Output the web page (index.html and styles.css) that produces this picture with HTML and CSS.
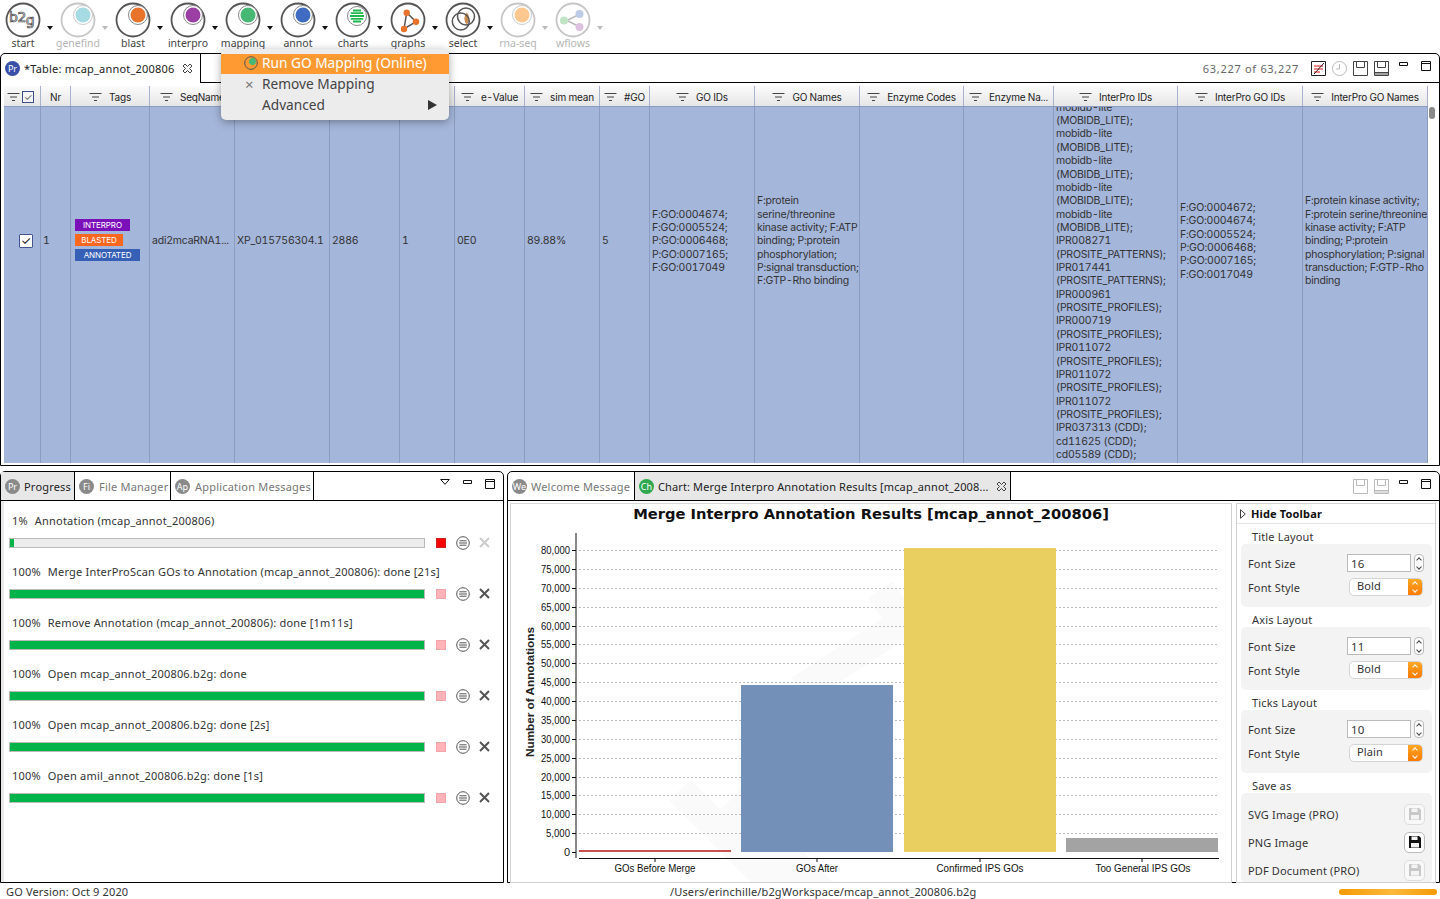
FILE: index.html
```html
<!DOCTYPE html>
<html lang="en">
<head>
<meta charset="utf-8">
<title>Blast2GO</title>
<link rel="stylesheet" href="styles.css">
</head>
<body>
<svg class="defs" width="0" height="0" aria-hidden="true">
  <defs>
    <symbol id="filter" viewBox="0 0 12 8"><path d="M0 .5h12M2.5 4h7M4.5 7.5h3" fill="none" stroke="#444" stroke-width="1"/></symbol>
    <symbol id="close" viewBox="0 0 11 11"><path d="M1 3l2-2 2.500 2.500L8 1l2 2-2.500 2.500L10 8l-2 2-2.500-2.500L3 10 1 8l2.500-2.500z" fill="none" stroke="#444" stroke-width="1"/></symbol>
    <symbol id="floppy" viewBox="0 0 15 15"><path d="M.5.500h14v14H.5zM3.500.5v6h8v-6" fill="none" stroke="currentColor" stroke-width="1"/></symbol>
    <symbol id="floppy2" viewBox="0 0 15 15"><path d="M.5.500h14v14H.5zM3.500.5v6h8v-6M.5 11.500h14" fill="none" stroke="currentColor" stroke-width="1"/><path d="M1 12h13v2H1z" fill="currentColor" opacity=".5"/></symbol>
    <symbol id="savebtn" viewBox="0 0 14 14"><path d="M1 1h10l2 2v10H1z" fill="currentColor"/><path d="M3.500 1.500h6v3.500h-6z" fill="#f4f4f4"/><path d="M3 8h8v4.500H3z" fill="#f4f4f4"/></symbol>
    <symbol id="minimize" viewBox="0 0 9 5"><path d="M.5.500h8v3h-8z" fill="none" stroke="#111" stroke-width="1"/></symbol>
    <symbol id="maximize" viewBox="0 0 10 10"><path d="M.5.500h9v9h-9zM.5 2.500h9" fill="none" stroke="#111" stroke-width="1"/></symbol>
    <symbol id="lines" viewBox="0 0 14 14"><circle cx="7" cy="7" r="6.300" fill="none" stroke="#555" stroke-width="1"/><path d="M3.500 4.800h7M3 7h8M3.500 9.200h7" stroke="#555" stroke-width="1"/></symbol>
    <symbol id="cross" viewBox="0 0 11 11"><path d="M1 1l9 9M10 1l-9 9" stroke="currentColor" stroke-width="2"/></symbol>
  </defs>
</svg>

<header class="toolbar">
  <div class="tool">
    <div class="tool-main">
      <svg class="tool-icon" viewBox="0 0 36 36"><circle cx="18" cy="18" r="16.500" class="ring"/><text x="4" y="20" class="b2g">b<tspan dx="-.5" dy="0">2</tspan><tspan dx="-.5" dy="3">g</tspan></text></svg>
      <span class="tool-label">start</span>
    </div>
    <span class="caret"></span>
  </div>
  <div class="tool off">
    <div class="tool-main">
      <svg class="tool-icon" viewBox="0 0 36 36"><circle cx="18" cy="18" r="16.500" class="ring"/><circle cx="23" cy="13" r="9.500" class="halo"/><circle cx="23" cy="13" r="7.500" fill="#a6dbe4"/></svg>
      <span class="tool-label">genefind</span>
    </div>
    <span class="caret"></span>
  </div>
  <div class="tool">
    <div class="tool-main">
      <svg class="tool-icon" viewBox="0 0 36 36"><circle cx="18" cy="18" r="16.500" class="ring"/><circle cx="23" cy="13" r="9.500" class="halo"/><circle cx="23" cy="13" r="7.500" fill="#e9732a"/></svg>
      <span class="tool-label">blast</span>
    </div>
    <span class="caret"></span>
  </div>
  <div class="tool">
    <div class="tool-main">
      <svg class="tool-icon" viewBox="0 0 36 36"><circle cx="18" cy="18" r="16.500" class="ring"/><circle cx="23" cy="13" r="9.500" class="halo"/><circle cx="23" cy="13" r="7.500" fill="#9b3fa5"/></svg>
      <span class="tool-label">interpro</span>
    </div>
    <span class="caret"></span>
  </div>
  <div class="tool">
    <div class="tool-main">
      <svg class="tool-icon" viewBox="0 0 36 36"><circle cx="18" cy="18" r="16.500" class="ring"/><circle cx="23" cy="13" r="9.500" class="halo"/><circle cx="23" cy="13" r="7.500" fill="#46b873"/></svg>
      <span class="tool-label">mapping</span>
    </div>
    <span class="caret"></span>
  </div>
  <div class="tool">
    <div class="tool-main">
      <svg class="tool-icon" viewBox="0 0 36 36"><circle cx="18" cy="18" r="16.500" class="ring"/><circle cx="23" cy="13" r="9.500" class="halo"/><circle cx="23" cy="13" r="7.500" fill="#3f6cc2"/></svg>
      <span class="tool-label">annot</span>
    </div>
    <span class="caret"></span>
  </div>
  <div class="tool">
    <div class="tool-main">
      <svg class="tool-icon" viewBox="0 0 36 36"><circle cx="18" cy="18" r="16.500" class="ring"/><circle cx="22" cy="14" r="9.500" class="halo"/><circle cx="22" cy="14" r="7.500" fill="#fff"/><path d="M18 8.500h8M15.800 11.200h12.400M15 14h14M15.800 16.800h12.400M18 19.500h8" stroke="#1fb84f" stroke-width="1.800"/></svg>
      <span class="tool-label">charts</span>
    </div>
    <span class="caret"></span>
  </div>
  <div class="tool">
    <div class="tool-main">
      <svg class="tool-icon" viewBox="0 0 36 36"><circle cx="18" cy="18" r="16.500" class="ring"/><path d="M16.700 10.700L26 19.700 14 27z" fill="none" stroke="#555" stroke-width="1.500"/><circle cx="16.700" cy="10.700" r="3.200" fill="#e9732a"/><circle cx="26" cy="19.700" r="3.200" fill="#e9732a"/><circle cx="14" cy="27" r="3.200" fill="#e9732a"/></svg>
      <span class="tool-label">graphs</span>
    </div>
    <span class="caret"></span>
  </div>
  <div class="tool">
    <div class="tool-main">
      <svg class="tool-icon" viewBox="0 0 36 36"><circle cx="18" cy="18" r="16.500" class="ring"/><path d="M21.800 10.500a8.500 8.500 0 0 1 0 12 8.500 8.500 0 0 1 0-12z" fill="#c98a4f"/><circle cx="15.800" cy="19.500" r="8.500" fill="none" stroke="#555" stroke-width="1.500"/><circle cx="21" cy="14.500" r="8.500" fill="none" stroke="#555" stroke-width="1.500"/></svg>
      <span class="tool-label">select</span>
    </div>
    <span class="caret"></span>
  </div>
  <div class="tool off">
    <div class="tool-main">
      <svg class="tool-icon" viewBox="0 0 36 36"><circle cx="18" cy="18" r="16.500" class="ring"/><circle cx="22" cy="13" r="9.500" class="halo"/><circle cx="22" cy="13" r="7.500" fill="#fcc88f"/></svg>
      <span class="tool-label">rna-seq</span>
    </div>
    <span class="caret"></span>
  </div>
  <div class="tool off">
    <div class="tool-main">
      <svg class="tool-icon" viewBox="0 0 36 36"><circle cx="18" cy="18" r="16.500" class="ring"/><path d="M13 18l10-5M13 19l10 5" stroke="#bbb" stroke-width="1.500"/><circle cx="9" cy="18.500" r="4" fill="#bfe3c4"/><circle cx="24.500" cy="12" r="4" fill="#bccbe6"/><circle cx="24.500" cy="25" r="4" fill="#dcc2df"/></svg>
      <span class="tool-label">wflows</span>
    </div>
    <span class="caret"></span>
  </div>
</header>

<section class="panel table-panel">
  <div class="tabbar">
    <div class="tab tab-table">
      <span class="badge badge-blue">Pr</span>
      <span class="tab-text dark">*Table: mcap_annot_200806</span>
      <svg class="close-icon"><use href="#close"/></svg>
    </div>
    <div class="tab-fill">
      <span class="count">63,227 of 63,227</span>
      <svg class="sq-btn" viewBox="0 0 15 15"><path d="M.5.500h14v14H.5z" fill="#fff" stroke="#222"/><path d="M3 5h9M3 8h9M3 11h6" stroke="#e11" stroke-width="1"/><path d="M3 13L13 2" stroke="#222" stroke-width="1"/></svg>
      <svg class="sq-btn" viewBox="0 0 15 15"><circle cx="7.500" cy="7.500" r="7" fill="none" stroke="#bbb"/><path d="M7.500 3v5H4" fill="none" stroke="#bbb"/></svg>
      <svg class="sq-btn faint-dark"><use href="#floppy"/></svg>
      <svg class="sq-btn faint-dark"><use href="#floppy2"/></svg>
      <svg class="win-min"><use href="#minimize"/></svg>
      <svg class="win-max"><use href="#maximize"/></svg>
    </div>
  </div>
  <div class="table">
    <div class="thead grid-cols">
      <div class="th th-check"><svg class="filter"><use href="#filter"/></svg><span class="mini-check">✓</span></div>
      <div class="th">Nr</div>
      <div class="th"><svg class="filter"><use href="#filter"/></svg>Tags</div>
      <div class="th th-clip"><svg class="filter"><use href="#filter"/></svg><span class="th-seq">SeqName</span></div>
      <div class="th"></div>
      <div class="th"></div>
      <div class="th"></div>
      <div class="th"><svg class="filter"><use href="#filter"/></svg>e-Value</div>
      <div class="th"><svg class="filter"><use href="#filter"/></svg>sim mean</div>
      <div class="th"><svg class="filter"><use href="#filter"/></svg>#GO</div>
      <div class="th"><svg class="filter"><use href="#filter"/></svg>GO IDs</div>
      <div class="th"><svg class="filter"><use href="#filter"/></svg>GO Names</div>
      <div class="th"><svg class="filter"><use href="#filter"/></svg>Enzyme Codes</div>
      <div class="th"><svg class="filter"><use href="#filter"/></svg>Enzyme Na...</div>
      <div class="th"><svg class="filter"><use href="#filter"/></svg>InterPro IDs</div>
      <div class="th"><svg class="filter"><use href="#filter"/></svg>InterPro GO IDs</div>
      <div class="th"><svg class="filter"><use href="#filter"/></svg>InterPro GO Names</div>
    </div>
    <div class="tbody">
      <div class="row grid-cols">
        <div class="td td-check"><span class="check">✓</span></div>
        <div class="td">1</div>
        <div class="td td-tags"><span class="tag tag-ip">INTERPRO</span><span class="tag tag-bl">BLASTED</span><span class="tag tag-an">ANNOTATED</span></div>
        <div class="td">adi2mcaRNA1...</div>
        <div class="td">XP_015756304.1</div>
        <div class="td">2886</div>
        <div class="td">1</div>
        <div class="td">0E0</div>
        <div class="td">89.88%</div>
        <div class="td">5</div>
        <div class="td"><p>F:GO:0004674;<br>F:GO:0005524;<br>P:GO:0006468;<br>P:GO:0007165;<br>F:GO:0017049</p></div>
        <div class="td"><p>F:protein<br>serine/threonine<br>kinase activity; F:ATP<br>binding; P:protein<br>phosphorylation;<br>P:signal transduction;<br>F:GTP-Rho binding</p></div>
        <div class="td"></div>
        <div class="td"></div>
        <div class="td"><p>mobidb-lite<br>(MOBIDB_LITE);<br>mobidb-lite<br>(MOBIDB_LITE);<br>mobidb-lite<br>(MOBIDB_LITE);<br>mobidb-lite<br>(MOBIDB_LITE);<br>mobidb-lite<br>(MOBIDB_LITE);<br>mobidb-lite<br>(MOBIDB_LITE);<br>mobidb-lite<br>(MOBIDB_LITE);<br>mobidb-lite<br>(MOBIDB_LITE);<br>IPR008271<br>(PROSITE_PATTERNS);<br>IPR017441<br>(PROSITE_PATTERNS);<br>IPR000961<br>(PROSITE_PROFILES);<br>IPR000719<br>(PROSITE_PROFILES);<br>IPR011072<br>(PROSITE_PROFILES);<br>IPR011072<br>(PROSITE_PROFILES);<br>IPR011072<br>(PROSITE_PROFILES);<br>IPR037313 (CDD);<br>cd11625 (CDD);<br>cd05589 (CDD);</p></div>
        <div class="td"><p>F:GO:0004672;<br>F:GO:0004674;<br>F:GO:0005524;<br>P:GO:0006468;<br>P:GO:0007165;<br>F:GO:0017049</p></div>
        <div class="td"><p>F:protein kinase activity;<br>F:protein serine/threonine<br>kinase activity; F:ATP<br>binding; P:protein<br>phosphorylation; P:signal<br>transduction; F:GTP-Rho<br>binding</p></div>
      </div>
    </div>
    <div class="scroll-thumb"></div>
  </div>
</section>

<div class="bottom">
  <section class="panel progress-panel">
    <div class="tabbar">
      <div class="tab tab-active tab-progress"><span class="badge badge-gray">Pr</span><span class="tab-text dark">Progress</span></div>
      <div class="tab tab-files"><span class="badge badge-gray">Fi</span><span class="tab-text">File Manager</span></div>
      <div class="tab tab-msgs"><span class="badge badge-gray">Ap</span><span class="tab-text">Application Messages</span></div>
      <div class="tab-fill">
        <svg class="view-menu" viewBox="0 0 10 6"><path d="M.7.500h8.600L5 5.300z" fill="none" stroke="#111"/></svg>
        <svg class="win-min"><use href="#minimize"/></svg>
        <svg class="win-max"><use href="#maximize"/></svg>
      </div>
    </div>
    <div class="progress-body">
      <div class="job">
        <div class="job-title"><b>1%</b>Annotation (mcap_annot_200806)</div>
        <div class="job-line">
          <div class="bar"><div class="bar-fill" style="width:1%"></div></div>
          <span class="stop"></span><svg class="job-btn"><use href="#lines"/></svg><svg class="job-x job-x-off"><use href="#cross"/></svg>
        </div>
      </div>
      <div class="job">
        <div class="job-title"><b>100%</b>Merge InterProScan GOs to Annotation (mcap_annot_200806): done [21s]</div>
        <div class="job-line">
          <div class="bar"><div class="bar-fill" style="width:100%"></div></div>
          <span class="stop stop-off"></span><svg class="job-btn"><use href="#lines"/></svg><svg class="job-x"><use href="#cross"/></svg>
        </div>
      </div>
      <div class="job">
        <div class="job-title"><b>100%</b>Remove Annotation (mcap_annot_200806): done [1m11s]</div>
        <div class="job-line">
          <div class="bar"><div class="bar-fill" style="width:100%"></div></div>
          <span class="stop stop-off"></span><svg class="job-btn"><use href="#lines"/></svg><svg class="job-x"><use href="#cross"/></svg>
        </div>
      </div>
      <div class="job">
        <div class="job-title"><b>100%</b>Open mcap_annot_200806.b2g: done</div>
        <div class="job-line">
          <div class="bar"><div class="bar-fill" style="width:100%"></div></div>
          <span class="stop stop-off"></span><svg class="job-btn"><use href="#lines"/></svg><svg class="job-x"><use href="#cross"/></svg>
        </div>
      </div>
      <div class="job">
        <div class="job-title"><b>100%</b>Open mcap_annot_200806.b2g: done [2s]</div>
        <div class="job-line">
          <div class="bar"><div class="bar-fill" style="width:100%"></div></div>
          <span class="stop stop-off"></span><svg class="job-btn"><use href="#lines"/></svg><svg class="job-x"><use href="#cross"/></svg>
        </div>
      </div>
      <div class="job">
        <div class="job-title"><b>100%</b>Open amil_annot_200806.b2g: done [1s]</div>
        <div class="job-line">
          <div class="bar"><div class="bar-fill" style="width:100%"></div></div>
          <span class="stop stop-off"></span><svg class="job-btn"><use href="#lines"/></svg><svg class="job-x"><use href="#cross"/></svg>
        </div>
      </div>
    </div>
  </section>

  <section class="panel chart-panel">
    <div class="tabbar">
      <div class="tab tab-welcome"><span class="badge badge-gray">We</span><span class="tab-text">Welcome Message</span></div>
      <div class="tab tab-active tab-chart"><span class="badge badge-green">Ch</span><span class="tab-text dark">Chart: Merge Interpro Annotation Results [mcap_annot_2008...</span><svg class="close-icon"><use href="#close"/></svg></div>
      <div class="tab-fill">
        <svg class="sq-btn faint"><use href="#floppy"/></svg>
        <svg class="sq-btn faint"><use href="#floppy2"/></svg>
        <svg class="win-min"><use href="#minimize"/></svg>
        <svg class="win-max"><use href="#maximize"/></svg>
      </div>
    </div>
    <div class="chart-body">
      <div class="chart-box">
        <svg class="chart" viewBox="511 504 720 378">
          <path d="M680 790L790 900M730 800L830 900M800 690L1000 560M880 590L960 700" stroke="#fafafa" stroke-width="30" fill="none"/>
          <text x="871" y="519" class="chart-title">Merge Interpro Annotation Results [mcap_annot_200806]</text>
          <text transform="translate(534 692) rotate(-90)" class="y-title" textLength="130" lengthAdjust="spacingAndGlyphs">Number of Annotations</text>
          <g class="grid">
            <path d="M579 550.500h640M579 569.500h640M579 588.500h640M579 607.500h640M579 626.500h640M579 644.500h640M579 663.500h640M579 682.500h640M579 701.500h640M579 720.500h640M579 739.500h640M579 758.500h640M579 777.500h640M579 795.500h640M579 814.500h640M579 833.500h640"/>
          </g>
          <path d="M576 533V858M572 550.500h4M572 569.500h4M572 588.500h4M572 607.500h4M572 626.500h4M572 644.500h4M572 663.500h4M572 682.500h4M572 701.500h4M572 720.500h4M572 739.500h4M572 758.500h4M572 777.500h4M572 795.500h4M572 814.500h4M572 833.500h4M572 852.500h4M579 858.500H1219M655 858v4M817 858v4M980 858v4M1142 858v4" stroke="#111" fill="none"/>
          <g class="yt">
            <text x="570" y="554" textLength="29" lengthAdjust="spacingAndGlyphs">80,000</text>
            <text x="570" y="573" textLength="29" lengthAdjust="spacingAndGlyphs">75,000</text>
            <text x="570" y="592" textLength="29" lengthAdjust="spacingAndGlyphs">70,000</text>
            <text x="570" y="611" textLength="29" lengthAdjust="spacingAndGlyphs">65,000</text>
            <text x="570" y="630" textLength="29" lengthAdjust="spacingAndGlyphs">60,000</text>
            <text x="570" y="648" textLength="29" lengthAdjust="spacingAndGlyphs">55,000</text>
            <text x="570" y="667" textLength="29" lengthAdjust="spacingAndGlyphs">50,000</text>
            <text x="570" y="686" textLength="29" lengthAdjust="spacingAndGlyphs">45,000</text>
            <text x="570" y="705" textLength="29" lengthAdjust="spacingAndGlyphs">40,000</text>
            <text x="570" y="724" textLength="29" lengthAdjust="spacingAndGlyphs">35,000</text>
            <text x="570" y="743" textLength="29" lengthAdjust="spacingAndGlyphs">30,000</text>
            <text x="570" y="762" textLength="29" lengthAdjust="spacingAndGlyphs">25,000</text>
            <text x="570" y="781" textLength="29" lengthAdjust="spacingAndGlyphs">20,000</text>
            <text x="570" y="799" textLength="29" lengthAdjust="spacingAndGlyphs">15,000</text>
            <text x="570" y="818" textLength="29" lengthAdjust="spacingAndGlyphs">10,000</text>
            <text x="570" y="837" textLength="24" lengthAdjust="spacingAndGlyphs">5,000</text>
            <text x="570" y="856">0</text>
          </g>
          <rect x="579" y="850" width="152" height="2" fill="#c8504f"/>
          <rect x="741" y="685" width="152" height="167" fill="#7390b8"/>
          <rect x="904" y="548" width="152" height="304" fill="#e9cf60"/>
          <rect x="1066" y="838" width="152" height="14" fill="#a3a3a3"/>
          <g class="xt">
            <text x="655" y="872" textLength="81" lengthAdjust="spacingAndGlyphs">GOs Before Merge</text>
            <text x="817" y="872" textLength="42" lengthAdjust="spacingAndGlyphs">GOs After</text>
            <text x="980" y="872" textLength="87" lengthAdjust="spacingAndGlyphs">Confirmed IPS GOs</text>
            <text x="1143" y="872" textLength="95" lengthAdjust="spacingAndGlyphs">Too General IPS GOs</text>
          </g>
        </svg>
      </div>
      <aside class="side">
        <div class="hide-row"><svg class="tri" viewBox="0 0 6 10"><path d="M.5.700L5.300 5 .5 9.300z" fill="none" stroke="#444"/></svg><b>Hide Toolbar</b></div>
        <div class="group-label">Title Layout</div>
        <div class="group">
          <div class="field"><span>Font Size</span><span class="input">16</span><span class="stepper"><i></i><i></i></span></div>
          <div class="field"><span>Font Style</span><span class="select">Bold<span class="sel-arrow"><i></i><i></i></span></span></div>
        </div>
        <div class="group-label">Axis Layout</div>
        <div class="group">
          <div class="field"><span>Font Size</span><span class="input">11</span><span class="stepper"><i></i><i></i></span></div>
          <div class="field"><span>Font Style</span><span class="select">Bold<span class="sel-arrow"><i></i><i></i></span></span></div>
        </div>
        <div class="group-label">Ticks Layout</div>
        <div class="group">
          <div class="field"><span>Font Size</span><span class="input">10</span><span class="stepper"><i></i><i></i></span></div>
          <div class="field"><span>Font Style</span><span class="select">Plain<span class="sel-arrow"><i></i><i></i></span></span></div>
        </div>
        <div class="group-label">Save as</div>
        <div class="group group-save">
          <div class="save-row"><span>SVG Image (PRO)</span><span class="save-btn off"><svg><use href="#savebtn"/></svg></span></div>
          <div class="save-row"><span>PNG Image</span><span class="save-btn"><svg><use href="#savebtn"/></svg></span></div>
          <div class="save-row"><span>PDF Document (PRO)</span><span class="save-btn off"><svg><use href="#savebtn"/></svg></span></div>
        </div>
      </aside>
    </div>
  </section>
</div>

<footer class="status">
  <span class="status-left">GO Version: Oct 9 2020</span>
  <span class="status-mid">/Users/erinchille/b2gWorkspace/mcap_annot_200806.b2g</span>
  <span class="status-bar"></span>
</footer>

<div class="menu">
  <div class="menu-item menu-hot"><svg class="menu-ico" viewBox="0 0 14 14"><circle cx="7" cy="7" r="6.300" fill="none" stroke="#555" stroke-width="1"/><circle cx="8.500" cy="5.500" r="3.500" fill="#46b873"/></svg><span class="menu-text">Run GO Mapping (Online)</span></div>
  <div class="menu-item"><span class="menu-x">×</span><span class="menu-text">Remove Mapping</span></div>
  <div class="menu-item"><span class="menu-text">Advanced</span><span class="menu-arrow"></span></div>
</div>
</body>
</html>
```

FILE: styles.css
```css
* { box-sizing: border-box; }
html, body { margin: 0; padding: 0; }
body {
  width: 1440px;
  height: 899px;
  overflow: hidden;
  background: #fff;
  color: #333;
  font-family: "Noto Sans", "DejaVu Sans", sans-serif;
  font-size: 11px;
  display: flex;
  flex-direction: column;
  position: relative;
}
.defs { position: absolute; }

/* toolbar */
.toolbar { height: 53px; display: flex; padding: 2px 0 0 5px; flex: none; }
.tool { width: 55px; display: flex; }
.tool-main { width: 36px; display: flex; flex-direction: column; align-items: center; }
.tool-icon { width: 36px; height: 36px; flex: none; }
.ring { fill: none; stroke: #555; stroke-width: 1.800; }
.halo { fill: #fff; stroke: #888; stroke-width: 1; }
.b2g { font-family: "DejaVu Sans", sans-serif; font-size: 14px; fill: #fff; stroke: #444; stroke-width: .7; }
.tool-label { font-size: 10.500px; line-height: 12px; margin-top: -1.500px; white-space: nowrap; color: #444; }
.caret { width: 0; height: 0; margin: 24px 0 0 6px; border: 3px solid transparent; border-top: 4px solid #111; border-bottom: 0; }
.off .ring { stroke: #c6c6c6; }
.off .halo { stroke: #ccc; }
.off .tool-label { color: #b5b5b5; }
.off .caret { border-top-color: #bbb; }

/* panels */
.panel { border: 1px solid #000; border-radius: 5px 5px 0 0; background: #fff; display: flex; flex-direction: column; }
.tabbar { height: 29px; flex: none; display: flex; align-items: stretch; }
.tab { display: flex; align-items: center; gap: 4px; padding-left: 4px; border-right: 1px solid #000; white-space: nowrap; border-bottom: 1px solid #000; }
.tab-active { background: #e7e7e7; }
.tab-fill { flex: 1; border-bottom: 1px solid #000; display: flex; align-items: center; justify-content: flex-end; }
.tab-text { color: #777; font-size: 11px; letter-spacing: .2px; }
.tab-text.dark { color: #222; }
.badge { width: 15px; height: 15px; border-radius: 50%; color: #fff; font-size: 9px; line-height: 15px; text-align: center; flex: none; }
.badge-blue { background: #3850a8; }
.badge-gray { background: #8a8a8a; }
.badge-green { background: #2fa84f; }
.close-icon { width: 11px; height: 11px; margin-left: 3px; flex: none; }
.count { color: #666; letter-spacing: .7px; margin-right: 12px; }
.sq-btn { width: 15px; height: 15px; margin-right: 6px; flex: none; }
.faint { color: #bbb; }
.faint-dark { color: #444; }
.win-min { width: 9px; height: 5px; margin: 0 13px 8px 4px; flex: none; }
.win-max { width: 10px; height: 10px; margin: 0 5px 5px 0; flex: none; }
.view-menu { width: 10px; height: 6px; margin: 0 9px 8px 0; }

/* table panel */
.table-panel { height: 413px; flex: none; }
.tab-table { width: 200px; padding-left: 4px; border-bottom: 0; }
.table-panel .tab-fill { padding-right: 3px; }
.table { flex: 1; min-height: 0; padding: 3px 0 2px 3px; display: flex; flex-direction: column; position: relative; font-family: Inter, "Liberation Sans", sans-serif; font-variant-numeric: tabular-nums; }
.grid-cols { display: grid; grid-template-columns: 37px 30px 79px 85px 95px 70px 55px 70px 75px 50px 105px 105px 104px 90px 124px 125px 125px; width: 1424px; }
.thead { height: 21px; flex: none; background: linear-gradient(#fbfbfb, #e6e6e6); border-bottom: 1px solid #8c9cc0; }
.th { display: flex; align-items: center; justify-content: center; gap: 7px; padding-top: 1px; border-right: 1px solid #a7b3cc; font-size: 10px; letter-spacing: -.2px; color: #222; white-space: nowrap; overflow: hidden; }
.th-clip { justify-content: flex-start; padding-left: 10px; }
.th-seq { margin-right: -40px; }
.filter { width: 13px; height: 8px; flex: none; }
.th-check { gap: 2px; justify-content: flex-start; padding-left: 3px; }
.mini-check { width: 12px; height: 12px; border: 1px solid #3c4c8c; background: #f6f6f6; color: #666; font-size: 10px; line-height: 10px; text-align: center; }
.tbody { flex: 1; min-height: 0; overflow: hidden; background: #a4b6da; width: 1424px; }
.row { height: 446px; margin-top: -89px; font-size: 10.500px; letter-spacing: -.22px; line-height: 13.360px; color: #333; }
.td { display: flex; align-items: center; padding-left: 2px; border-right: 1px solid #8b9cc0; white-space: nowrap; overflow: hidden; }
.td p { margin: 0; }
.td-check { padding: 0 0 0 15px; }
.check { width: 14px; height: 14px; border: 1px solid #47558f; border-radius: 1px; background: #fff; color: #222; font-size: 12px; line-height: 12px; text-align: center; }
.td-tags { flex-direction: column; align-items: flex-start; justify-content: center; gap: 3px; padding: 0 0 2px 4px; }
.tag { height: 12px; color: #fff; font-size: 8px; line-height: 12px; text-align: center; letter-spacing: -.1px; }
.tag-ip { width: 55px; background: #7b10b8; }
.tag-bl { width: 48px; background: #ff6620; }
.tag-an { width: 65px; background: #3560b5; }
.scroll-thumb { position: absolute; right: 4px; top: 24px; width: 6px; height: 12px; border-radius: 3px; background: #888; }

/* bottom */
.bottom { height: 412px; margin-top: 5px; flex: none; display: flex; gap: 3px; }
.progress-panel { width: 504px; flex: none; border-radius: 5px 5px 0 0; }
.chart-panel { flex: 1; }
.tab-progress { width: 74px; }
.tab-files { width: 96px; gap: 5px; }
.tab-msgs { width: 143px; gap: 5px; }
.tab-welcome { width: 127px; }
.tab-chart { width: 376px; }
.tab-chart .tab-text { letter-spacing: .12px; }
.progress-panel .tab-fill, .chart-panel .tab-fill { padding-right: 3px; }
.progress-body { flex: 1; border-left: 3px solid #eaeaea; padding: 11px 9px 0 5px; }
.job { height: 51px; }
.job-title { height: 17px; padding-left: 3px; line-height: 17px; font-size: 11px; letter-spacing: .2px; color: #333; }
.job-title b { font-weight: 400; margin-right: 7px; }
.job-line { display: flex; align-items: center; height: 17px; margin-top: 5px; }
.bar { width: 416px; height: 10px; background: #ececec; border: 1px solid #bbb; flex: none; }
.bar-fill { height: 100%; background: #00b44a; }
.stop { width: 10px; height: 10px; margin-left: 11px; background: #f00; border: 1px solid #c22; flex: none; }
.stop-off { background: #ffb3b9; border-color: #f2a4a8; }
.job-btn { width: 14px; height: 14px; margin-left: 10px; flex: none; }
.job-x { width: 11px; height: 11px; margin-left: 9px; flex: none; color: #555; }
.job-x-off { color: #ccc; }

/* chart */
.chart-body { flex: 1; min-height: 0; display: flex; padding: 2px 3px 0 2px; gap: 4px; }
.chart-box { width: 722px; flex: none; height: 380px; border: 1px solid #d0d0d0; border-top: 1px solid #d8d8d8; background: #fff; }
.chart { display: block; width: 720px; height: 378px; font-family: "Liberation Sans", sans-serif; }
.chart-title { font-family: "DejaVu Sans", sans-serif; font-weight: 700; font-size: 14.700px; text-anchor: middle; fill: #111; }
.y-title { font-weight: 700; font-size: 11px; text-anchor: middle; fill: #222; }
.grid path { stroke: #bbb; stroke-dasharray: 2 2; fill: none; }
.yt text { font-size: 11px; text-anchor: end; fill: #111; }
.xt text { font-size: 11px; text-anchor: middle; fill: #111; }
.side { flex: 1; height: 380px; overflow: hidden; border: 1px solid #d0d0d0; padding: 0 3px 0 4px; color: #333; letter-spacing: .15px; }
.hide-row { height: 20px; margin: 0 -3px 0 -4px; padding-left: 3px; display: flex; align-items: center; gap: 5px; border-bottom: 1px solid #e4e4e4; color: #111; }
.tri { width: 6px; height: 10px; }
.group-label { height: 20px; line-height: 20px; padding: 3px 0 0 11px; color: #333; }
.group { height: 63px; background: #f3f3f3; border-radius: 5px; padding: 7px 7px 0 7px; }
.field { height: 24px; display: flex; align-items: center; }
.field > span:first-child { width: 99px; flex: none; }
.input { width: 64px; height: 18px; background: #fff; border: 1px solid #bbb; padding-left: 3px; line-height: 18px; font-size: 11.500px; }
.stepper { width: 10px; height: 18px; margin-left: 3px; border: 1px solid #bbb; border-radius: 4px; background: #fff; display: flex; flex-direction: column; align-items: center; justify-content: center; gap: 3px; }
.stepper i { width: 4px; height: 4px; border-left: 1px solid #444; border-top: 1px solid #444; transform: rotate(45deg); }
.stepper i + i { transform: rotate(225deg); }
.select { width: 74px; height: 18px; margin-left: 2px; background: #fff; border: 1px solid #d4d4d4; border-radius: 5px; padding-left: 7px; line-height: 14px; position: relative; overflow: hidden; }
.sel-arrow { position: absolute; right: 0; top: 0; width: 14px; height: 100%; background: linear-gradient(#ffa726, #ff7a00); display: flex; flex-direction: column; align-items: center; justify-content: center; gap: 2px; }
.sel-arrow i { width: 4px; height: 4px; border-left: 1px solid #fff; border-top: 1px solid #fff; transform: rotate(45deg); }
.sel-arrow i + i { transform: rotate(225deg); }
.group-save { height: 90px; padding: 7px 7px 0; }
.save-row { height: 28px; display: flex; align-items: center; justify-content: space-between; }
.save-btn { width: 21px; height: 21px; border: 1px solid #bbb; border-radius: 5px; background: #fff; display: flex; align-items: center; justify-content: center; color: #111; }
.save-btn svg { width: 14px; height: 14px; }
.save-btn.off { color: #c8c8c8; border-color: #ddd; background: #f8f8f8; }

/* status */
.status { height: 16px; flex: none; display: flex; align-items: center; color: #333; font-size: 11px; letter-spacing: .15px; }
.status-left { width: 670px; padding-left: 6px; }
.status-mid { width: 669px; }
.status-bar { width: 98px; height: 6px; margin-top: 2px; border-radius: 3px; background: linear-gradient(90deg, #f49a05, #fbb83a 55%, #f49a05); }

/* menu */
.menu { position: absolute; left: 221px; top: 49px; width: 228px; height: 71px; padding-top: 5px; background: #ececec; border-radius: 5px; box-shadow: 0 2px 8px rgba(0,0,0,.35); font-size: 13.700px; color: #444; }
.menu-item { height: 21px; display: flex; align-items: center; padding-left: 41px; position: relative; line-height: 21px; }
.menu-text { position: relative; top: -1px; }
.menu-hot { height: 20px; background: #ff9a33; color: #fff; }
.menu-hot .menu-text { top: -2px; }
.menu-ico { position: absolute; left: 23px; top: 2px; width: 14px; height: 14px; }
.menu-x { position: absolute; left: 24px; color: #777; font-size: 15px; }
.menu-arrow { position: absolute; right: 12px; top: 5px; width: 0; height: 0; border: 5px solid transparent; border-left: 9px solid #333; border-right: 0; }
```
